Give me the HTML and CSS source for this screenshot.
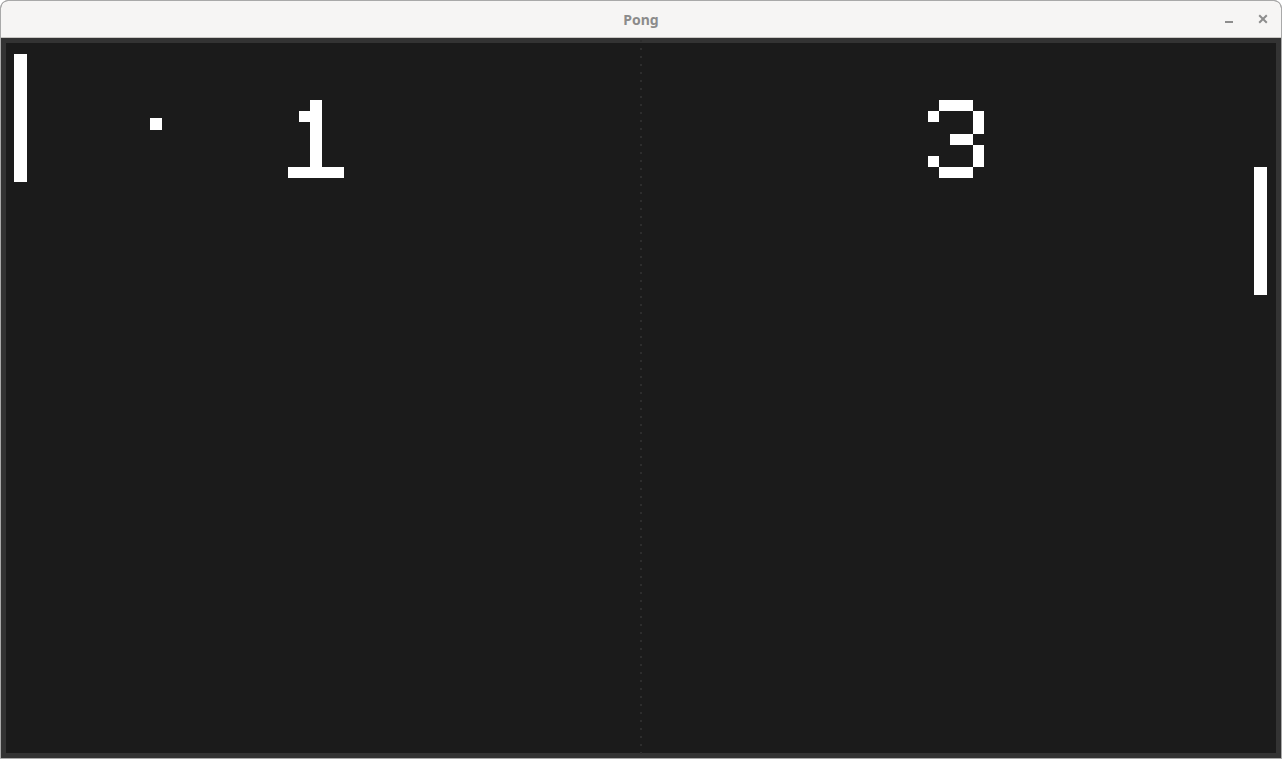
FILE: index.html
```html
<!DOCTYPE html>
<html lang="en">
<head>
<meta charset="utf-8">
<title>Pong</title>
<link rel="stylesheet" href="styles.css">
</head>
<body>
<div class="window">
  <header class="titlebar">
    <div class="tb-spacer"></div>
    <div class="tb-title">Pong</div>
    <div class="tb-controls">
      <svg class="tb-btn" width="10" height="10" viewBox="0 0 10 10"><rect x="1" y="7" width="8" height="2" fill="#8d8d8d"/></svg>
      <svg class="tb-btn" width="10" height="10" viewBox="0 0 10 10"><path d="M1.2 1.2 L8.8 8.8 M8.8 1.2 L1.2 8.8" stroke="#8d8d8d" stroke-width="2" fill="none"/></svg>
    </div>
  </header>
  <div class="frame">
    <div class="midline"></div>
    <main class="canvas">
      <div class="paddle paddle-left"></div>
      <div class="paddle paddle-right"></div>
      <div class="ball"></div>
      <div class="score score-left">
        <i></i><i></i><i class="on"></i><i></i><i></i>
        <i></i><i class="on"></i><i class="on"></i><i></i><i></i>
        <i></i><i></i><i class="on"></i><i></i><i></i>
        <i></i><i></i><i class="on"></i><i></i><i></i>
        <i></i><i></i><i class="on"></i><i></i><i></i>
        <i></i><i></i><i class="on"></i><i></i><i></i>
        <i class="on"></i><i class="on"></i><i class="on"></i><i class="on"></i><i class="on"></i>
      </div>
      <div class="score score-right">
        <i></i><i class="on"></i><i class="on"></i><i class="on"></i><i></i>
        <i class="on"></i><i></i><i></i><i></i><i class="on"></i>
        <i></i><i></i><i></i><i></i><i class="on"></i>
        <i></i><i></i><i class="on"></i><i class="on"></i><i></i>
        <i></i><i></i><i></i><i></i><i class="on"></i>
        <i class="on"></i><i></i><i></i><i></i><i class="on"></i>
        <i></i><i class="on"></i><i class="on"></i><i class="on"></i><i></i>
      </div>
    </main>
  </div>
</div>
</body>
</html>
```

FILE: styles.css
```css
* { box-sizing: border-box; }
html, body { margin: 0; padding: 0; background: #ffffff; }
body { width: 1282px; height: 759px; overflow: hidden; }

.window {
  width: 1282px;
  height: 759px;
  border: 1px solid #a9a9a9;
  border-radius: 8px 8px 0 0;
  overflow: hidden;
  display: flex;
  flex-direction: column;
  background: #333333;
}

.titlebar {
  height: 37px;
  flex: 0 0 37px;
  background: #f6f5f4;
  border-bottom: 1px solid #c9c7c4;
  display: grid;
  grid-template-columns: 1fr auto 1fr;
  align-items: center;
}
.tb-title {
  font-family: "Noto Sans", "Open Sans", sans-serif;
  font-weight: 700;
  font-size: 14px;
  color: #8b8b8b;
  padding-top: 1px;
}
.tb-controls {
  display: flex;
  justify-content: flex-end;
  align-items: center;
  gap: 24px;
  padding-right: 13px;
  padding-top: 0px;
}
.tb-btn { display: block; }

.frame {
  position: relative;
  flex: 1 1 auto;
  padding: 5px;
  background: #333333;
}
.midline {
  position: absolute;
  left: 639px;
  top: 0;
  bottom: 0;
  width: 2px;
  background: repeating-linear-gradient(to bottom, #2d2d2d 0 2px, transparent 2px 8px);
  background-position: 0 2px;
  z-index: 1;
}

.canvas {
  position: relative;
  width: 1270px;
  height: 710px;
  background: #1b1b1b;
}

.paddle {
  position: absolute;
  width: 13px;
  height: 128px;
  background: #ffffff;
  z-index: 2;
}
.paddle-left { left: 8px; top: 11px; }
.paddle-right { left: 1248px; top: 124px; }

.ball {
  position: absolute;
  left: 144px;
  top: 75px;
  width: 12px;
  height: 12px;
  background: #ffffff;
  z-index: 2;
}

.score {
  position: absolute;
  top: 57px;
  display: grid;
  grid-template-columns: repeat(5, 11.2px);
  grid-template-rows: repeat(7, 11.2px);
  z-index: 2;
}
.score-left { left: 282px; }
.score-right { left: 922px; }
.score i { display: block; }
.score i.on { background: #ffffff; }
```
